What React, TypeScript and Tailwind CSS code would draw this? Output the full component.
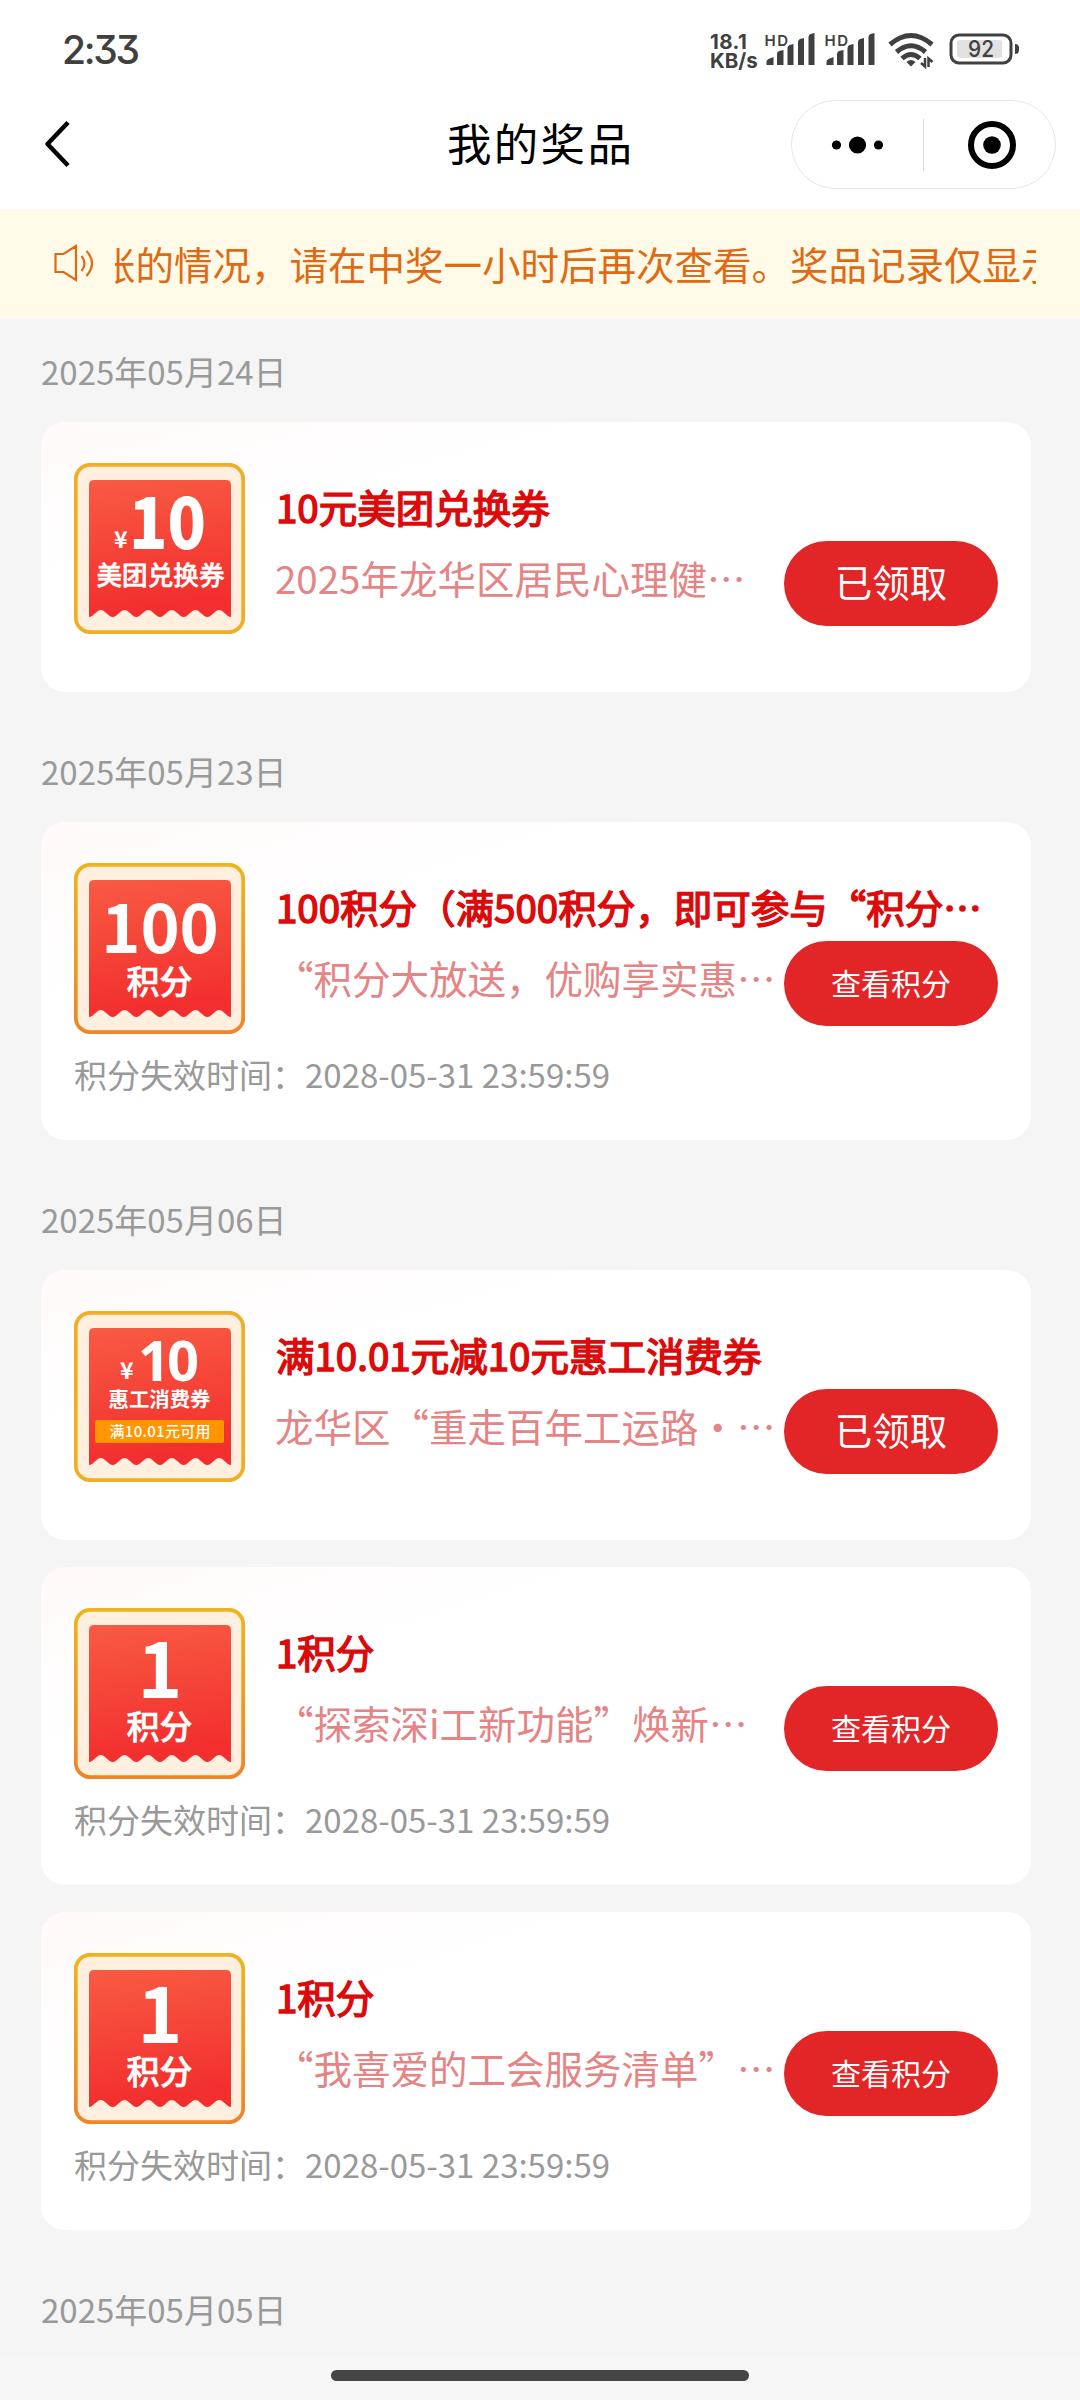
type Prize = {
  icon: "meituan" | "points" | "consume";
  amount?: string;
  title: string;
  activity: string;
  expire?: string;
};

const groups: { date: string; prizes: Prize[] }[] = [
  {
    date: "2025年05月24日",
    prizes: [
      {
        icon: "meituan",
        title: "10元美团兑换券",
        activity: "2025年龙华区居民心理健…",
      },
    ],
  },
  {
    date: "2025年05月23日",
    prizes: [
      {
        icon: "points",
        amount: "100",
        title: "100积分（满500积分，即可参与“积分…",
        activity: "“积分大放送，优购享实惠…",
        expire: "2028-05-31 23:59:59",
      },
    ],
  },
  {
    date: "2025年05月06日",
    prizes: [
      {
        icon: "consume",
        title: "满10.01元减10元惠工消费券",
        activity: "龙华区“重走百年工运路・…",
      },
      {
        icon: "points",
        amount: "1",
        title: "1积分",
        activity: "“探索深i工新功能”焕新…",
        expire: "2028-05-31 23:59:59",
      },
      {
        icon: "points",
        amount: "1",
        title: "1积分",
        activity: "“我喜爱的工会服务清单”…",
        expire: "2028-05-31 23:59:59",
      },
    ],
  },
  { date: "2025年05月05日", prizes: [] },
];

function Signal() {
  return (
    <svg width="52" height="36" viewBox="0 0 52 36" overflow="visible" fill="#404040">
      <text x="0.5" y="13.5" fontSize="15" fontWeight="600" textLength="23.5" className="font-['Inter']">
        HD
      </text>
      <path d="M2.500 33v-3q0-2 2-3l5-2v8zM13 33V22q0-2 2-3l4.500-1v15zM23.500 33V16q0-2 2-3l4-1v21zM34 33V10q0-2 2-3l4-1v27zM44.500 33V5q0-2 2-3l4-1v32z" />
    </svg>
  );
}

function StatusBar() {
  return (
    <div className="flex h-[88px] items-start pt-[30px] pl-[62px] font-['Inter'] text-[#404040]">
      <span className="w-[648px] text-[39px] leading-[40px] font-medium tracking-[-2.3px] [font-feature-settings:'cv09']">
        2:33
      </span>
      <div className="w-[54px] pt-[2px] text-[20.5px] leading-[19px] font-bold">
        <div className="tracking-[0.4px]">18.1</div>
        <div className="tracking-[0px]">KB/s</div>
      </div>
      <div className="flex gap-2 pt-[2px]">
        <Signal />
        <Signal />
      </div>
      <svg className="mt-px ml-[11px]" width="50" height="38" viewBox="0 0 50 38" fill="none" stroke="#404040" strokeWidth="5">
        <path d="M3 13.500Q24 -4.500 45 13.500" />
        <path d="M9.500 21Q24 8.500 38.500 21" />
        <path d="M15 27.500Q24 19.500 33 27.500" />
        <path d="M19.500 31q4.500-4 9 0l-4.500 4.500z" fill="#404040" stroke="none" />
        <path d="M38 27v8.500l-4-3.500M41.500 36v-8.500l4 3.500" strokeWidth="2.500" />
      </svg>
      <svg className="mt-[3px] ml-[12px]" width="72" height="32" viewBox="0 0 72 32">
        <rect x="2" y="2" width="60" height="28" rx="8" fill="none" stroke="#404040" strokeWidth="3" />
        <rect x="8" y="7" width="45" height="18" rx="3" fill="#e1e1e1" />
        <path d="M66 11q4 0 4 4v2q0 4-4 4z" fill="#404040" />
        <text x="32" y="24" textAnchor="middle" fontSize="22.500" fontWeight="500" textLength="26" lengthAdjust="spacingAndGlyphs" fill="#404040">
          92
        </text>
      </svg>
    </div>
  );
}

function NavBar() {
  return (
    <div className="flex h-[121px] items-start">
      <svg className="mt-[32px] ml-[43px]" width="28" height="48" viewBox="0 0 28 48" fill="none" stroke="#000" strokeWidth="4.500" strokeLinejoin="round">
        <path d="M25 2.500L4.500 24L25 45.500" />
      </svg>
      <h1 className="ml-[376px] w-[344px] pt-[21px] text-[44.500px] leading-[66px] tracking-[2.300px] text-black">
        我的奖品
      </h1>
      <div className="mt-3 flex h-[89px] w-[265px] items-center rounded-full border border-[#e6e6e6]">
        <svg className="ml-[39px]" width="54" height="20" viewBox="0 0 54 20">
          <circle cx="5.500" cy="10" r="4.600" />
          <circle cx="26.500" cy="10" r="8.600" />
          <circle cx="47.500" cy="10" r="4.600" />
        </svg>
        <div className="ml-[38px] h-[52px] w-px bg-[#dcdcdc]" />
        <svg className="ml-[43px]" width="50" height="50" viewBox="0 0 50 50">
          <circle cx="25" cy="25" r="21" fill="none" stroke="#000" strokeWidth="6" />
          <circle cx="25" cy="25" r="8.800" />
        </svg>
      </div>
    </div>
  );
}

function NoticeBar() {
  return (
    <div className="flex h-[109px] shrink-0 items-center bg-[#fffbe8] text-[#e06a14]">
      <svg className="mb-0.5 ml-[53px]" width="42" height="38" viewBox="0 0 42 38" fill="none" stroke="currentColor" strokeWidth="2.200">
        <path d="M2.500 10H10.500L23 2V36L10.500 28H2.500Z" />
        <path d="M28.500 12q6 7 0 15M33.500 7q11 12 0 25" />
      </svg>
      <div className="ml-[20px] w-[921px] overflow-hidden">
        <p className="-ml-[18px] pb-[2px] text-[38.500px] leading-[58px] whitespace-nowrap">
          账的情况，请在中奖一小时后再次查看。奖品记录仅显示
        </p>
      </div>
    </div>
  );
}

function PrizeIcon({ icon, amount }: { icon: Prize["icon"]; amount?: string }) {
  const border = icon === "points" ? "url(#borderOrange)" : "#efae25";

  // torn edge: each wave is 23.66 wide and 7 high, drawn right to left
  const wave = "c-4 0-7.83-7-11.83-7s-7.83 7-11.83 7";

  return (
    <svg className="shrink-0" width="171" height="171" viewBox="0 0 171 171" fill="#fff" fontWeight="700">
      <defs>
        <linearGradient id="borderOrange" x1="0" y1="0" x2="0" y2="1">
          <stop offset="0" stopColor="#eeb41f" />
          <stop offset="1" stopColor="#ee8526" />
        </linearGradient>
        <linearGradient id="ticket" x1="0" y1="0" x2="0.15" y2="1">
          <stop offset="0" stopColor="#f85b43" />
          <stop offset="1" stopColor="#f22e2e" />
        </linearGradient>
      </defs>
      <rect x="1.800" y="1.800" width="167.400" height="167.400" rx="14.500" fill="#feefdf" stroke={border} strokeWidth="3.800" />
      <path d={`M15 154V22q0-5 5-5H152q5 0 5 5V154${wave.repeat(6)}Z`} fill="url(#ticket)" />
      {icon === "meituan" && (
        <>
          <text x="40" y="85" fontSize="23">¥</text>
          <text x="93.500" y="86" fontSize="70" fontWeight="900" textAnchor="middle" textLength="77" lengthAdjust="spacingAndGlyphs">
            10
          </text>
          <text x="86.500" y="122" fontSize="25.600" fontWeight="500" textAnchor="middle" stroke="#fff" strokeWidth="0.500">
            美团兑换券
          </text>
        </>
      )}
      {icon === "points" && (
        <>
          <text x="86" y="90" fontSize={amount === "1" ? 76 : 66.5} textAnchor="middle">
            {amount}
          </text>
          <text x="85.500" y="131" fontSize="33" fontWeight="500" textAnchor="middle" stroke="#fff" strokeWidth="0.600">
            积分
          </text>
        </>
      )}
      {icon === "consume" && (
        <>
          <text x="46" y="68" fontSize="23">¥</text>
          <text x="94.500" y="69.500" fontSize="56" textAnchor="middle" textLength="61" className="font-['Open_Sans']">10</text>
          <text x="85.500" y="96" fontSize="20.400" textAnchor="middle">惠工消费券</text>
          <rect x="21" y="109" width="129" height="23" rx="2" fill="#ff9500" />
          <text x="86" y="126" fontSize="15" fontWeight="500" textAnchor="middle" textLength="101">满10.01元可用</text>
        </>
      )}
    </svg>
  );
}

function PrizeCard({ prize }: { prize: Prize }) {
  const isPoints = prize.icon === "points";

  return (
    <div
      className={`${isPoints ? "h-[318px]" : "h-[270px]"} rounded-[24px] bg-white bg-linear-to-br from-[#fffafa] to-white to-30% pt-[41px] pr-[33px] pl-[33px]`}
    >
      <div className="flex">
        <PrizeIcon icon={prize.icon} amount={prize.amount} />
        <div className="ml-[30px] min-w-0 flex-1 pt-[14px]">
          <div className="pl-px text-[38.500px] leading-[58px] whitespace-nowrap text-[#dc0a0a] [-webkit-text-stroke:1.500px_#dc0a0a]">
            {prize.title}
          </div>
          <div className="flex items-start">
            <div className="w-[509px] pt-[13px] text-[38.500px] leading-[58px] whitespace-nowrap text-[#e58484]">
              {prize.activity}
            </div>
            <button
              className={`mt-[6px] h-[85px] w-[214px] shrink-0 rounded-full bg-[#e22526] text-white ${isPoints ? "pb-[3px] text-[30px]" : "pb-[5px] text-[37.500px]"}`}
            >
              {isPoints ? "查看积分" : "已领取"}
            </button>
          </div>
        </div>
      </div>
      {prize.expire && (
        <p className="mt-[16px] text-[33px] leading-[48px] text-[#999]">积分失效时间：{prize.expire}</p>
      )}
    </div>
  );
}

export default function App() {
  return (
    <div
      lang="zh-CN"
      className="flex h-[2400px] w-[1080px] flex-col overflow-hidden bg-[#f5f5f5] font-['Noto_Sans_CJK_SC',sans-serif]"
    >
      <header className="shrink-0 bg-white">
        <StatusBar />
        <NavBar />
      </header>
      <NoticeBar />
      <main className="min-h-0 flex-1 overflow-hidden pt-px pr-[49px] pl-[41px]">
        {groups.map((group) => (
          <section key={group.date}>
            <h2 className="h-[103px] pt-[28px] text-[33px] leading-[48px] text-[#999]">{group.date}</h2>
            {group.prizes.map((prize, i) => (
              <div key={i} className="pb-[27px]">
                <PrizeCard prize={prize} />
              </div>
            ))}
          </section>
        ))}
      </main>
      <footer className="flex h-[43px] shrink-0 justify-center bg-[#f7f7f7] pt-[13px]">
        <div className="h-[11px] w-[418px] rounded-full bg-[#454545]" />
      </footer>
    </div>
  );
}
